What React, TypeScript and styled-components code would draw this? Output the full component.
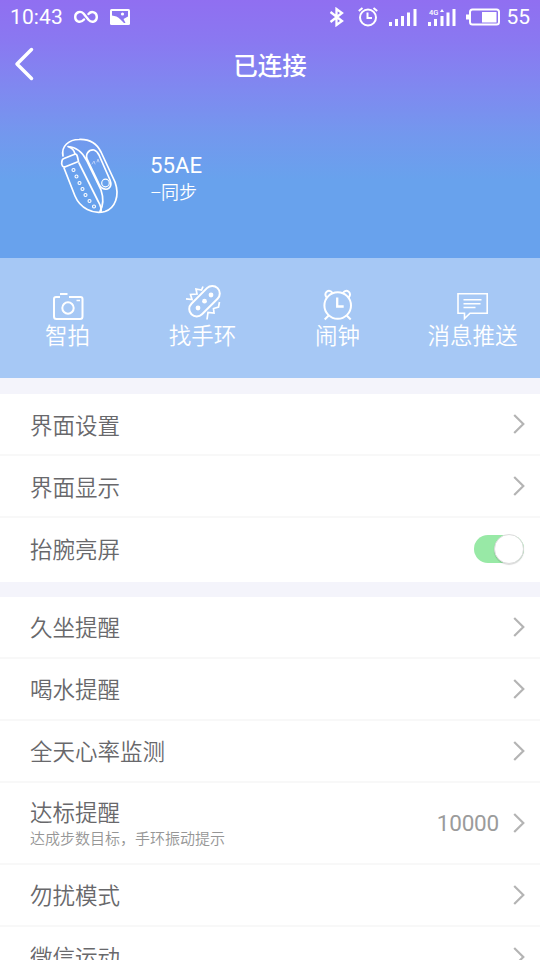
import React from "react";
import styled, { createGlobalStyle } from "styled-components";

const GlobalStyle = createGlobalStyle`
  * { box-sizing: border-box; }
  body {
    margin: 0;
    background: #f4f4fb;
    font-family: Roboto, "Noto Sans CJK SC", sans-serif;
    overflow: hidden;
  }
`;

const Screen = styled.div`
  width: 540px;
  height: 960px;
  overflow: hidden;
  display: flex;
  flex-direction: column;
`;

const Hero = styled.header`
  flex: none;
  height: 258px;
  color: #fff;
  background: linear-gradient(#906ff1 0, #8a78f1 40px, #7f89f0 90px, #7398ee 135px, #68a2ed 180px, #68a2ed 258px);
`;

const StatusBar = styled.div`
  height: 34px;
  padding: 0 10px 0 10px;
  display: flex;
  align-items: center;
  font-size: 21px;
  line-height: 34px;
`;

const Clock = styled.span`
  width: 64px;
  letter-spacing: 0.1px;
`;

const StatusIcon = styled.svg<{ $gap?: number }>`
  flex: none;
  display: block;
  margin-left: ${(p) => p.$gap ?? 0}px;
`;

const Spacer = styled.div`
  flex: 1;
`;

const Battery = styled.span`
  margin-left: 6px;
`;

const TitleBar = styled.div`
  height: 60px;
  padding: 0 10px;
  display: grid;
  grid-template-columns: 40px 1fr 40px;
  align-items: center;
`;

const Title = styled.h1`
  margin: 5px 0 0;
  font-size: 24.5px;
  line-height: 36px;
  font-weight: 500;
  text-align: center;
`;

const Device = styled.div`
  height: 164px;
  padding: 0 0 1px 54px;
  display: flex;
  align-items: center;
`;

const DeviceText = styled.div`
  margin-left: 20px;
  padding-top: 5px;
`;

const DeviceName = styled.div`
  font-size: 22.2px;
  line-height: 28px;
`;

const SyncState = styled.div`
  font-size: 18px;
  line-height: 27px;
  font-weight: 350;
`;

const Dash = styled.span`
  letter-spacing: -0.8px;
`;

const Tabs = styled.nav`
  flex: none;
  height: 120px;
  padding-top: 25px;
  display: grid;
  grid-template-columns: repeat(4, 1fr);
  background: #a6c8f5;
  color: #fff;
`;

const Tab = styled.div`
  display: flex;
  flex-direction: column;
  align-items: center;
  font-size: 22.5px;
  line-height: 30px;
  font-weight: 350;
`;

const TabIcon = styled.svg`
  display: block;
  width: 40px;
  height: 38px;
  overflow: visible;
`;

const Group = styled.section<{ $top: number; $bottom?: number }>`
  flex: none;
  margin-top: ${(p) => p.$top}px;
  padding-bottom: ${(p) => p.$bottom ?? 0}px;
  background: #fff;
`;

const Row = styled.div<{ $tall?: boolean }>`
  height: ${(p) => (p.$tall ? 82 : 62)}px;
  padding: 1px 15px 0 30px;
  display: flex;
  align-items: center;
  justify-content: space-between;
  border-bottom: 2px solid #f8f8f8;
  &:last-child { border-bottom-color: transparent; }
`;

const Label = styled.div`
  padding-top: 2px;
  font-size: 22.5px;
  line-height: 30px;
  font-weight: 350;
  color: #68686b;
`;

const Hint = styled.div`
  font-size: 15px;
  line-height: 22px;
  font-weight: 350;
  color: #969696;
`;

const Trailing = styled.div`
  display: flex;
  align-items: center;
  gap: 15px;
  font-size: 22.5px;
  color: #9b9b9b;
`;

const Value = styled.span`
  margin-right: -1px;
  letter-spacing: -0.2px;
`;

const Switch = styled.div`
  width: 50px;
  height: 28px;
  margin: 1px 1px 0 0;
  border-radius: 14px;
  background: #98e9a6;
  display: flex;
  align-items: center;
  justify-content: flex-end;
`;

const Knob = styled.div`
  width: 30px;
  height: 30px;
  flex: none;
  border-radius: 50%;
  background: #fff;
  border: 1px solid #dcdcdc;
  box-shadow: 0 1px 1px rgba(0, 0, 0, 0.15);
`;

const ChevronIcon = styled.svg`
  display: block;
  margin-bottom: 1px;
`;

const Chevron = () => (
  <ChevronIcon width="12" height="20" viewBox="0 0 12 20" fill="none" stroke="#b4b4b4" strokeWidth="2.2">
    <path d="M1.2 1 10.3 10 1.2 19" />
  </ChevronIcon>
);

const BandPicture = () => (
  <svg width="76" height="84" viewBox="54 134 76 84" fill="none" stroke="#fff" strokeWidth="1.7" strokeLinecap="round" strokeLinejoin="round">
    <path d="M63 156C61 146 69 139.500 79 139.500C90 139 97 144 101 152L115 182C120 196 115 208 105 211.500C93 215 80 208 75 196L64 168" />
    <path d="M68 146.500C76 147 83 153 87 161L101 190C104 199 103 206 100 211.500" />
    <path d="M64 158.500 74 154.500C76.500 153.500 77 155 77.500 157L78.500 161.500 66 166.500C63 168 61 165 61.800 162C62 160 62 159 64 158.500Z" />
    <path d="M75 154C74 150 72 148 69 147M79 163 97 199C100 205 102 207 101 211.500" />
    <path d="M88 161C84 154 89 149.500 94 150C97 151 98 153 99 155L110 180C113 188 107 191 102 188C100 187 99 184 98 182Z" />
    <circle cx="105.500" cy="183" r="3.800" strokeWidth="1.200" />
    <path d="M92 164 94 161 95 164M97 162 98 159 99 162" stroke="#b8cdf7" strokeWidth="1" />
    <g strokeWidth="1.100">
      <circle cx="73.500" cy="170" r="1.500" />
      <circle cx="76.500" cy="176.500" r="1.500" />
      <circle cx="79.500" cy="183" r="1.500" />
      <circle cx="82.500" cy="189" r="1.500" />
      <circle cx="85.500" cy="195" r="1.500" />
      <circle cx="89.500" cy="201" r="1.500" />
      <circle cx="94" cy="206.500" r="1.500" />
    </g>
  </svg>
);

const CameraIcon = () => (
  <TabIcon viewBox="47.5 283.5 40 38" fill="none" stroke="#fff" strokeWidth="2">
    <path d="M59.500 297.500H55.500Q53.500 297.500 53.500 299.500V317Q53.500 319.500 56 319.500H79.500Q82 319.500 82 317V299.500Q82 297.500 80 297.500H68.500M59.500 294.500H67" />
    <circle cx="67.500" cy="308.500" r="5.700" />
    <path d="M76 301H79.500" strokeWidth="1.500" />
  </TabIcon>
);

const FindIcon = () => (
  <TabIcon viewBox="182.500 283 40 38" fill="none" stroke="#fff" strokeWidth="2">
    <rect x="185.500" y="293.700" width="37" height="15" rx="7.500" transform="rotate(-45 204 301.200)" />
    <g fill="#fff" stroke="none">
      <circle cx="197.500" cy="308" r="2.400" />
      <circle cx="204" cy="301.200" r="2.400" />
      <circle cx="210.500" cy="295" r="2.400" />
    </g>
    <path d="M185.500 298.800 191.500 299.500 190 294.500 196.500 294 195.500 289 201 290 202.500 286.500M219 302 218 307 213 308.500 213.500 313 207.500 312.500 206.500 319.500" strokeWidth="1.700" />
  </TabIcon>
);

const AlarmIcon = () => (
  <TabIcon viewBox="317.800 283 40 38" fill="none" stroke="#fff" strokeWidth="2">
    <circle cx="337.500" cy="305.500" r="13.300" />
    <path d="M326.500 297.500C322.500 293 328.500 288 332.500 293M348.500 297.500C352.500 293 346.500 288 342.500 293" />
    <path d="M328.500 315.500 324.500 319.500M346.500 315.500 350.500 319.500" />
    <path d="M337 297.500V306.500H343.500" strokeWidth="2.300" />
  </TabIcon>
);

const MessageIcon = () => (
  <TabIcon viewBox="453 283 40 38" fill="none" stroke="#fff" strokeWidth="1.600">
    <path d="M458 293.800H487.200V313.200H470L464.500 318.500V313.200H458Z" />
    <path d="M463.500 299.800H481.500M463.500 303.700H480.500M463.500 307.500H475.500" />
  </TabIcon>
);

const tabs = [
  { label: "智拍", Icon: CameraIcon },
  { label: "找手环", Icon: FindIcon },
  { label: "闹钟", Icon: AlarmIcon },
  { label: "消息推送", Icon: MessageIcon },
];

interface RowData {
  label: string;
  hint?: string;
  value?: string;
  toggle?: boolean;
}

const displayRows: RowData[] = [
  { label: "界面设置" },
  { label: "界面显示" },
  { label: "抬腕亮屏", toggle: true },
];

const reminderRows: RowData[] = [
  { label: "久坐提醒" },
  { label: "喝水提醒" },
  { label: "全天心率监测" },
  { label: "达标提醒", hint: "达成步数目标，手环振动提示", value: "10000" },
  { label: "勿扰模式" },
  { label: "微信运动" },
];

const SettingRow = ({ label, hint, value, toggle }: RowData) => (
  <Row $tall={!!hint}>
    <div>
      <Label>{label}</Label>
      {hint && <Hint>{hint}</Hint>}
    </div>
    <Trailing>
      {value && <Value>{value}</Value>}
      {toggle ? <Switch><Knob /></Switch> : <Chevron />}
    </Trailing>
  </Row>
);

export default function App() {
  return (
    <>
      <GlobalStyle />
      <Screen>
        <Hero>
          <StatusBar>
            <Clock>10:43</Clock>
            <StatusIcon width="24" height="14" viewBox="0 0 24 14" fill="none" stroke="#fff" strokeWidth="2.4" strokeLinecap="round">
              <path d="M10 9.500C6.500 13.500 1.200 12 1.200 7C1.200 2 6.500 .500 9.500 3.500L14.500 9.800C17.500 13.300 22.800 12 22.800 7C22.800 2 17.500 .500 14.500 4" />
            </StatusIcon>
            <StatusIcon $gap={12} width="20" height="16" viewBox="0 0 20 16">
              <rect width="20" height="16" rx="1.500" fill="#fff" />
              <path d="M2 2H18V7.500L13.500 10 15.500 14H14L10.500 10.500C8 7.500 5 7 2 6.500Z" fill="#8b75f1" />
              <circle cx="12.500" cy="5" r="1.600" fill="#fff" />
            </StatusIcon>
            <Spacer />
            <StatusIcon width="16" height="20" viewBox="0 0 16 20" fill="none" stroke="#fff" strokeWidth="2.300">
              <path d="M1.500 5 13 14 7.500 18V2L13 6 1.500 15" />
            </StatusIcon>
            <StatusIcon $gap={13} width="20" height="20" viewBox="0 0 20 20" fill="none" stroke="#fff" strokeWidth="2">
              <circle cx="10" cy="10.500" r="8" />
              <path d="M9.500 5.500V11H14M.800 4 4.500 1M19.200 4 15.500 1" />
            </StatusIcon>
            <StatusIcon $gap={11} width="28" height="18" viewBox="0 0 28 18" fill="#fff">
              <path d="M0 14h3v4H0zM6 11h3v7H6zM12 8h3v10h-3zM18 4.500h3V18h-3zM24.500 1h3v17h-3z" />
            </StatusIcon>
            <StatusIcon $gap={11} width="28" height="18" viewBox="0 0 28 18" fill="#fff">
              <path d="M0 14h3v4H0zM6 11h3v7H6zM12.500 8h3v10h-3zM18.500 4.500h3V18h-3zM24.500 1h3v17h-3zM12 4l2-3 2 3z" />
              <text x="1" y="6.500" fontSize="7.500" fontWeight="500">4G</text>
            </StatusIcon>
            <StatusIcon $gap={10} width="34" height="18" viewBox="0 0 34 18">
              <rect x="4" y="1.500" width="29" height="15" rx="2.500" fill="none" stroke="#fff" strokeWidth="2" />
              <path d="M0 6.500h3v5H0zM16 4h14.500v10.500H16z" fill="#fff" />
            </StatusIcon>
            <Battery>55</Battery>
          </StatusBar>
          <TitleBar>
            <svg width="26" height="34" viewBox="0 0 26 34" fill="none" stroke="#fff" strokeWidth="3.500" strokeLinecap="round" strokeLinejoin="round">
              <path d="M21.500 2.500 7 17 21.500 31.500" />
            </svg>
            <Title>已连接</Title>
          </TitleBar>
          <Device>
            <BandPicture />
            <DeviceText>
              <DeviceName>55AE</DeviceName>
              <SyncState><Dash>–</Dash>同步</SyncState>
            </DeviceText>
          </Device>
        </Hero>
        <Tabs>
          {tabs.map(({ label, Icon }) => (
            <Tab key={label}>
              <Icon />
              {label}
            </Tab>
          ))}
        </Tabs>
        <Group $top={16} $bottom={1.5}>
          {displayRows.map((row) => <SettingRow key={row.label} {...row} />)}
        </Group>
        <Group $top={15}>
          {reminderRows.map((row) => <SettingRow key={row.label} {...row} />)}
        </Group>
      </Screen>
    </>
  );
}
